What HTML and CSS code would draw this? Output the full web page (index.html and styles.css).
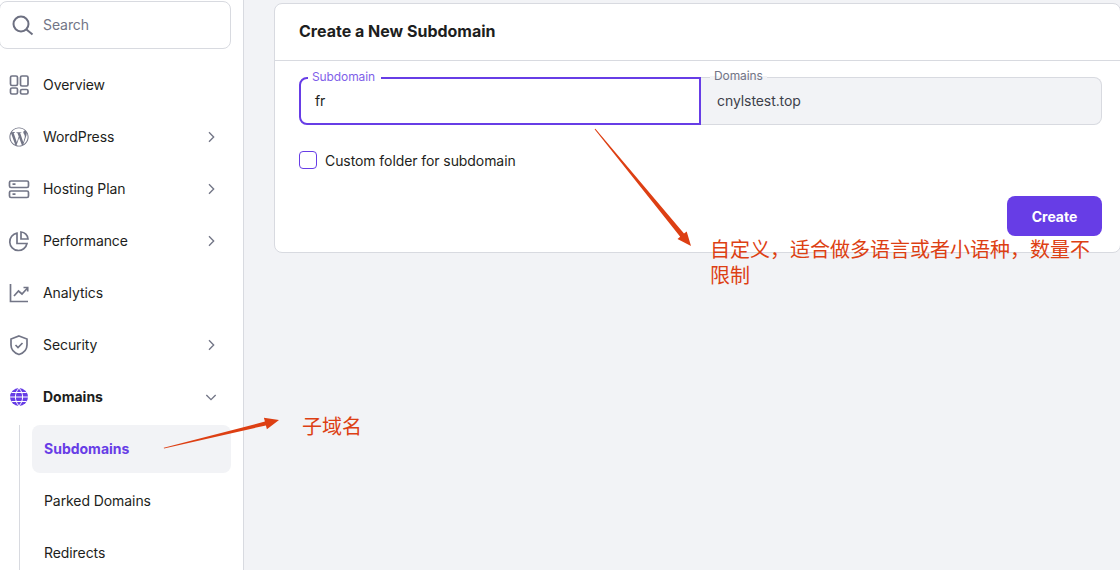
FILE: index.html
```html
<!DOCTYPE html>
<html lang="en">
<head>
<meta charset="UTF-8">
<meta name="viewport" content="width=device-width, initial-scale=1.0">
<title>Subdomains</title>
<link rel="stylesheet" href="styles.css">
</head>
<body>
  <div class="page">
    <aside class="sidebar">
      <div class="search">
        <svg class="search-icon" viewBox="0 0 24 24"><circle cx="10" cy="11" r="7.500"/><path d="M15.500 16.500l6 5"/></svg>
        <span class="txt">Search</span>
      </div>

      <nav class="nav">
        <a class="nav-item">
          <svg class="icon" viewBox="0 0 24 24"><rect x="3.5" y="3" width="7" height="9.5" rx="1.5"/><rect x="13.5" y="3" width="7.5" height="10" rx="1.5"/><rect x="3.5" y="15" width="7" height="6" rx="1.5"/><rect x="13.5" y="16.5" width="7.5" height="4.5" rx="1.5"/></svg>
          <span class="txt">Overview</span>
        </a>
        <a class="nav-item">
          <svg class="icon icon-wp" viewBox="-3 -3 30 30"><path d="M21.469 6.825c.84 1.537 1.318 3.3 1.318 5.175 0 3.979-2.156 7.456-5.363 9.325l3.295-9.527c.615-1.54.82-2.771.82-3.864 0-.405-.026-.78-.07-1.11m-7.981.105c.647-.03 1.232-.105 1.232-.105.582-.075.514-.93-.067-.899 0 0-1.755.135-2.88.135-1.064 0-2.85-.15-2.85-.15-.585-.03-.661.855-.075.885 0 0 .54.061 1.125.09l1.68 4.605-2.37 7.08L5.354 6.9c.649-.03 1.234-.1 1.234-.1.585-.075.516-.93-.065-.896 0 0-1.746.138-2.874.138-.2 0-.438-.008-.69-.015C4.911 3.15 8.235 1.215 12 1.215c2.809 0 5.365 1.072 7.286 2.833-.046-.003-.091-.009-.141-.009-1.06 0-1.812.923-1.812 1.914 0 .89.513 1.643 1.06 2.531.411.72.89 1.643.89 2.977 0 .915-.354 1.994-.821 3.479l-1.075 3.585-3.9-11.61.001.014zM12 22.784c-1.059 0-2.081-.153-3.048-.437l3.237-9.406 3.315 9.087c.024.053.05.101.078.149-1.12.393-2.325.609-3.582.609M1.211 12c0-1.564.336-3.05.935-4.39L7.29 21.709C3.694 19.96 1.212 16.271 1.211 12M12 0C5.385 0 0 5.385 0 12s5.385 12 12 12 12-5.385 12-12S18.615 0 12 0"/></svg>
          <span class="txt">WordPress</span>
          <svg class="chevron" viewBox="0 0 24 24"><path d="M9 5l7 7-7 7"/></svg>
        </a>
        <a class="nav-item">
          <svg class="icon" viewBox="0 0 24 24"><rect x="2.5" y="4" width="19" height="6.5" rx="1.5"/><rect x="2.5" y="14" width="19" height="6.5" rx="1.5"/><path d="M5.5 7.2h3M5.5 17.2h3"/></svg>
          <span class="txt">Hosting Plan</span>
          <svg class="chevron" viewBox="0 0 24 24"><path d="M9 5l7 7-7 7"/></svg>
        </a>
        <a class="nav-item">
          <svg class="icon" viewBox="0 0 24 24"><path d="M10 4.2a8.7 8.7 0 1 0 10 10.3h-10z"/><path d="M14 3a7.5 7.5 0 0 1 7 7h-7z"/></svg>
          <span class="txt">Performance</span>
          <svg class="chevron" viewBox="0 0 24 24"><path d="M9 5l7 7-7 7"/></svg>
        </a>
        <a class="nav-item">
          <svg class="icon" viewBox="0 0 24 24"><path d="M3.500 3v17.500h17.500"/><path d="M7 15l4.500-5 3.500 3 5.500-6"/><path d="M16.500 6.500h4.200v4"/></svg>
          <span class="txt">Analytics</span>
        </a>
        <a class="nav-item">
          <svg class="icon" viewBox="0 0 24 24"><path d="M12 3l8 3v6c0 5-3.400 8-8 9.500C7.400 20 4 17 4 12V6z"/><path d="M8.500 12l2.500 2.500 4.500-4.500"/></svg>
          <span class="txt">Security</span>
          <svg class="chevron" viewBox="0 0 24 24"><path d="M9 5l7 7-7 7"/></svg>
        </a>
        <a class="nav-item nav-item-open">
          <svg class="icon icon-globe" viewBox="0 0 24 24"><circle class="globe-disc" cx="12" cy="12" r="9"/><path d="M3 12h18M4.500 7.500h15M4.500 16.500h15M12 3c-4.800 5.500-4.800 12.500 0 18M12 3c4.800 5.500 4.800 12.500 0 18"/></svg>
          <span class="txt">Domains</span>
          <svg class="chevron" viewBox="0 0 24 24"><path d="M5 9l7 7 7-7"/></svg>
        </a>
        <div class="subnav">
          <a class="subnav-item subnav-item-active"><span class="txt">Subdomains</span></a>
          <a class="subnav-item"><span class="txt">Parked Domains</span></a>
          <a class="subnav-item"><span class="txt">Redirects</span></a>
        </div>
      </nav>
    </aside>

    <main class="main">
      <section class="card">
        <h3 class="card-title">Create a New Subdomain</h3>
        <div class="card-body">
          <div class="fields">
            <div class="field field-active">
              <label class="field-label">Subdomain</label>
              <span class="txt">fr</span>
            </div>
            <div class="field field-disabled">
              <label class="field-label">Domains</label>
              <span class="txt">cnylstest.top</span>
            </div>
          </div>
          <div class="check-row">
            <span class="checkbox"></span>
            <span>Custom folder for subdomain</span>
          </div>
          <div class="actions">
            <button type="button" class="btn-create"><span class="txt">Create</span></button>
          </div>
        </div>
      </section>
    </main>
  </div>

  <!-- red notes drawn over the screenshot -->
  <svg class="arrows" viewBox="0 0 1120 570">
    <polygon points="595.400,128.700 684,233.600 686.700,231.400 691,246 677.500,239 680.200,236.800 594.600,129.300"/>
    <polygon points="164,448.500 265.900,425.400 266.900,429.300 279,420 263.900,417.700 264.900,421.600 163.800,447.700"/>
  </svg>
  <p class="note note-custom">自定义，适合做多语言或者小语种，数量不限制</p>
  <p class="note note-sub">子域名</p>
</body>
</html>
```

FILE: styles.css
```css
* {
  box-sizing: border-box;
}

body {
  margin: 0;
  font-family: Inter, "Noto Sans", sans-serif;
  font-size: 14px;
  letter-spacing: -0.08px;
  color: #1d1e20;
  background-color: #f2f3f6;
  overflow: hidden;
}

/* Inter sits a bit low in its line box */
.txt {
  padding-bottom: 2px;
}

.page {
  display: flex;
  height: 570px;
  overflow: hidden;
}

/* sidebar */
.sidebar {
  flex: none;
  width: 244px;
  padding: 1px 12px 0 0;
  background-color: #fff;
  border-right: 1px solid #d8dae0;
}

.search {
  display: flex;
  align-items: center;
  gap: 8px;
  width: 232px;
  height: 48px;
  margin-left: -1px;
  padding-left: 11px;
  border: 1px solid #d8dae0;
  border-radius: 8px;
  color: #727586;
}

.search-icon {
  flex: none;
  width: 24px;
  height: 24px;
  fill: none;
  stroke: #6d7081;
  stroke-width: 2;
}

.nav {
  display: flex;
  flex-direction: column;
  gap: 4px;
  margin-top: 12px;
}

.nav-item {
  display: flex;
  align-items: center;
  gap: 12px;
  height: 48px;
  padding-left: 7px;
}

.icon {
  flex: none;
  width: 24px;
  height: 24px;
  fill: none;
  stroke: #727586;
  stroke-width: 1.7;
}

.icon-wp {
  fill: #727586;
  stroke: none;
}

.icon-globe {
  stroke: #fff;
  stroke-width: 1;
}

.globe-disc {
  fill: #673de6;
  stroke: none;
}

.chevron {
  width: 16px;
  height: 16px;
  margin-left: auto;
  margin-right: 12px;
  fill: none;
  stroke: #727586;
  stroke-width: 2;
}

.nav-item-open {
  font-weight: 700;
  letter-spacing: 0;
}

.subnav {
  display: flex;
  flex-direction: column;
  gap: 4px;
  margin-left: 19px;
  padding-left: 12px;
  border-left: 1px solid #d8dae0;
}

.subnav-item {
  display: flex;
  align-items: center;
  height: 48px;
  padding-left: 12px;
  border-radius: 8px;
}

.subnav-item-active {
  background-color: #f2f3f6;
  color: #673de6;
  font-weight: 700;
  letter-spacing: 0;
}

/* main card, its right edge runs off the window */
.main {
  flex: 1;
  padding: 3px 0 0 30px;
}

.card {
  width: 847px;
  background-color: #fff;
  border: 1px solid #d8dae0;
  border-radius: 8px;
}

.card-title {
  height: 57px;
  margin: 0;
  padding: 0 24px;
  border-bottom: 1px solid #d8dae0;
  font-size: 16px;
  font-weight: 700;
  letter-spacing: 0;
  line-height: 54px;
}

.card-body {
  padding: 16px 18px 16px 24px;
}

.fields {
  display: flex;
}

.field {
  position: relative;
  display: flex;
  align-items: center;
  flex: 1;
  height: 48px;
}

.field-label {
  position: absolute;
  padding: 0 4px;
  font-size: 12px;
  letter-spacing: -0.1px;
  line-height: 14px;
}

.field-active {
  padding-left: 14px;
  border: 2px solid #673de6;
  border-radius: 8px 0 0 8px;
}

.field-active .field-label {
  top: -9px;
  left: 7px;
  padding-right: 6px;
  background-color: #fff;
  color: #7f5fe9;
}

.field-disabled {
  padding-left: 16px;
  background-color: #f2f3f6;
  border: 1px solid #d8dae0;
  border-left: none;
  border-radius: 0 8px 8px 0;
  color: #3d3f4a;
}

.field-disabled .field-label {
  top: -9px;
  left: 9px;
  background: linear-gradient(#fff 50%, #f2f3f6 50%);
  color: #727586;
}

.check-row {
  display: flex;
  align-items: center;
  gap: 8px;
  margin-top: 26px;
}

.checkbox {
  flex: none;
  width: 18px;
  height: 18px;
  border: 1px solid #673de6;
  border-radius: 4px;
}

.actions {
  display: flex;
  justify-content: flex-end;
  margin-top: 27px;
}

.btn-create {
  width: 95px;
  height: 40px;
  background-color: #673de6;
  color: #fff;
  border: none;
  border-radius: 8px;
  font-family: inherit;
  font-size: 14px;
  font-weight: 700;
  letter-spacing: 0;
}

/* notes on top of the screenshot */
.arrows {
  position: absolute;
  top: 0;
  left: 0;
  width: 1120px;
  height: 570px;
  fill: #dd3f13;
}

.note {
  position: absolute;
  margin: 0;
  font-family: "Noto Sans CJK SC", sans-serif;
  font-size: 20px;
  letter-spacing: 0;
  line-height: 26px;
  color: #dd3f13;
}

.note-custom {
  top: 236px;
  left: 710px;
  width: 384px;
}

.note-sub {
  top: 413px;
  left: 302px;
}
```
